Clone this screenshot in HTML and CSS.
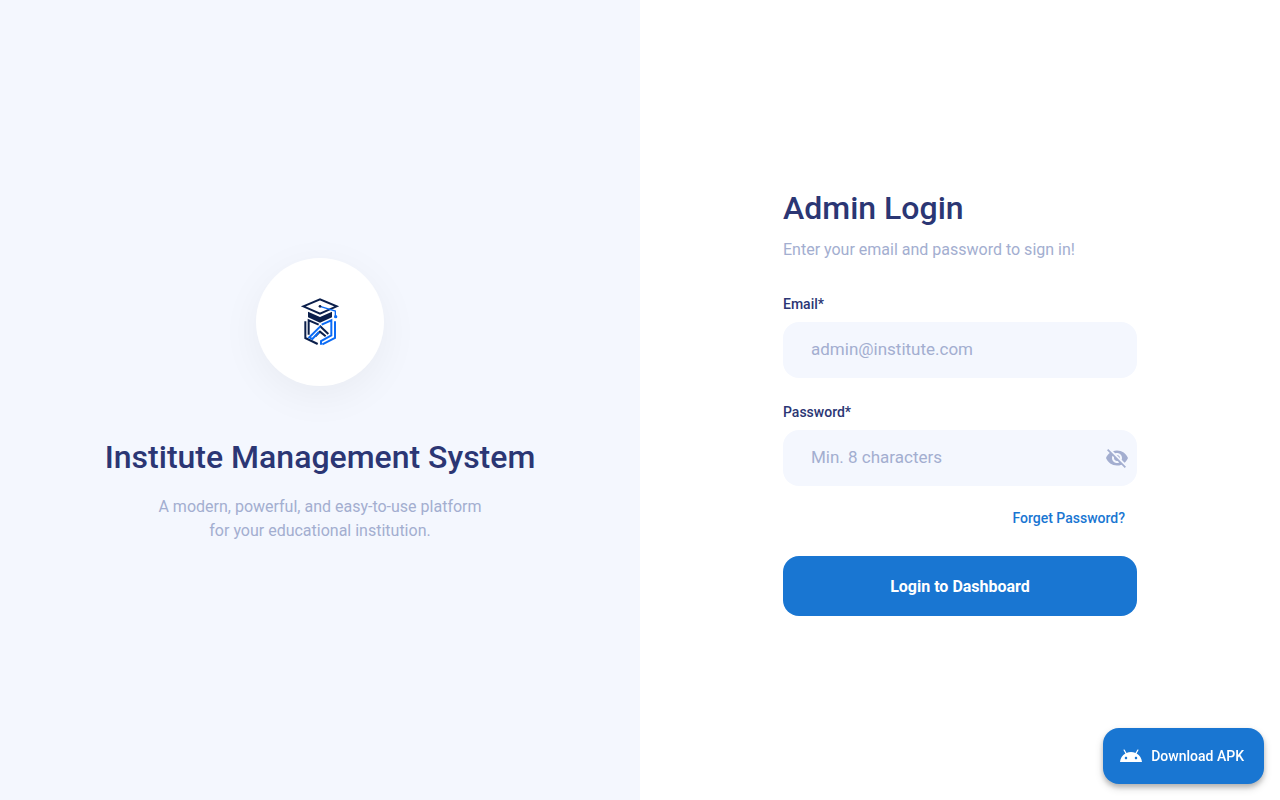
FILE: index.html
```html
<!DOCTYPE html>
<html lang="en">
<head>
    <meta charset="UTF-8">
    <meta name="viewport" content="width=device-width, initial-scale=1.0">
    <title>Institute Management System</title>
    <link rel="stylesheet" href="styles.css">
</head>
<body>
    <div class="page">
        <section class="brand-panel">
            <div class="logo-circle">
                <svg class="logo" viewBox="30 33 120 150" fill="none" stroke-width="6" aria-hidden="true">
                    <!-- Shield and book -->
                    <g stroke="#0b1f4b">
                        <path d="M46 106v50l37 18"/>
                        <path d="M56 146V103l30 13"/>
                        <path d="M89 119l26 25"/>
                        <path d="M76 151l14-14 17 14"/>
                    </g>
                    <g stroke="#0b6bf5">
                        <path d="M135 106v50l-38 19"/>
                        <path d="M95 116l29-13v45l-31 17v11"/>
                        <path d="M91 121l-33 33 9 5 20-21"/>
                    </g>
                    <!-- Cap -->
                    <path d="M54 77l36 16 36-16v17l-36 16-36-16z" fill="#0b1f4b"/>
                    <path d="M40 61l50-21 50 21-50 22z" fill="#fff" stroke="#0b1f4b"/>
                    <path d="M90 61l46 14v18" stroke="#0b6bf5" stroke-width="4"/>
                    <circle cx="90" cy="61" r="4" fill="#0b1f4b"/>
                    <circle cx="137" cy="92" r="5" fill="#0b6bf5"/>
                </svg>
            </div>
            <h1 class="brand-title">Institute Management System</h1>
            <p class="brand-text">A modern, powerful, and easy-to-use platform<br>for your educational institution.</p>
        </section>

        <main class="login-panel">
            <form class="login-form">
                <h2>Admin Login</h2>
                <p class="subtitle">Enter your email and password to sign in!</p>

                <label for="email">Email*</label>
                <div class="field">
                    <input type="email" id="email" placeholder="admin@institute.com">
                </div>

                <label for="password">Password*</label>
                <div class="field">
                    <input type="password" id="password" placeholder="Min. 8 characters">
                    <button type="button" class="toggle-btn" aria-label="Show password">
                        <svg viewBox="0 0 24 24" fill="currentColor"><path d="M12 7c2.76 0 5 2.24 5 5 0 .65-.13 1.26-.36 1.83l2.92 2.92c1.51-1.26 2.7-2.89 3.43-4.75-1.73-4.39-6-7.5-11-7.5-1.4 0-2.74.25-3.98.7l2.16 2.16C10.74 7.13 11.35 7 12 7zM2 4.27l2.28 2.28.46.46C3.08 8.3 1.78 10.02 1 12c1.73 4.39 6 7.5 11 7.5 1.55 0 3.03-.3 4.38-.84l.42.42L19.73 22 21 20.73 3.27 3 2 4.27zM7.53 9.8l1.55 1.55c-.05.21-.08.43-.08.65 0 1.66 1.34 3 3 3 .22 0 .44-.03.65-.08l1.55 1.55c-.67.33-1.41.53-2.2.53-2.76 0-5-2.24-5-5 0-.79.2-1.53.53-2.2zm4.31-.78l3.15 3.15.02-.16c0-1.66-1.34-3-3-3l-.17.01z"/></svg>
                    </button>
                </div>

                <a class="forgot-link" href="#">Forget Password?</a>
                <button type="submit" class="login-btn">Login to Dashboard</button>
            </form>
        </main>
    </div>

    <button type="button" class="download-btn">
        <svg viewBox="0 0 24 24" fill="currentColor" aria-hidden="true"><path d="M17.6 9.48l1.84-3.18c.16-.31.04-.69-.26-.85-.29-.15-.65-.06-.83.22l-1.88 3.24c-2.86-1.21-6.08-1.21-8.94 0L5.65 5.67c-.19-.29-.58-.38-.87-.2-.28.18-.37.54-.22.83L6.4 9.48C3.3 11.25 1.28 14.44 1 18h22c-.28-3.56-2.3-6.75-5.4-8.52zM7 15.25c-.69 0-1.25-.56-1.25-1.25s.56-1.25 1.25-1.25 1.25.56 1.25 1.25-.56 1.25-1.25 1.25zm10 0c-.69 0-1.25-.56-1.25-1.25s.56-1.25 1.25-1.25 1.25.56 1.25 1.25-.56 1.25-1.25 1.25z"/></svg>
        Download APK
    </button>
</body>
</html>
```
FILE: styles.css
```css
:root {
    --primary-color: #1976d2;
    --title-color: #2b3674;
    --muted-color: #a3aed0;
    --panel-color: #f4f7fe;
}

* {
    margin: 0;
    padding: 0;
    box-sizing: border-box;
}

body {
    font-family: Roboto, sans-serif;
    background-color: white;
    color: var(--title-color);
}

button, input {
    font-family: inherit;
    border: none;
}

button {
    cursor: pointer;
}

.page {
    display: grid;
    grid-template-columns: 1fr 1fr;
    min-height: 100vh;
}

.brand-panel {
    display: flex;
    flex-direction: column;
    align-items: center;
    justify-content: center;
    background-color: var(--panel-color);
    text-align: center;
}

.logo-circle {
    display: flex;
    align-items: center;
    justify-content: center;
    width: 128px;
    height: 128px;
    margin-bottom: 47px;
    border-radius: 50%;
    background-color: white;
    box-shadow: 0 10px 40px rgba(0, 0, 0, 0.05);
}

.logo {
    width: 40px;
    height: 50px;
}

h1, h2 {
    font-size: 32px;
    font-weight: 500;
    line-height: 48px;
}

.brand-title {
    margin-bottom: 14px;
}

.brand-text, .subtitle {
    color: var(--muted-color);
    font-size: 16px;
    line-height: 24px;
}

.login-panel {
    display: flex;
    align-items: center;
    justify-content: center;
    padding: 24px;
}

.login-form {
    display: flex;
    flex-direction: column;
    width: 100%;
    max-width: 354px;
}

.subtitle {
    margin: 6px 0 32px;
}

label {
    margin-bottom: 8px;
    font-size: 14px;
    font-weight: 500;
    line-height: 20px;
}

.field {
    display: flex;
    align-items: center;
    margin-bottom: 24px;
    padding-right: 8px;
    border-radius: 16px;
    background-color: var(--panel-color);
}

.field input {
    flex: 1;
    min-width: 0;
    height: 56px;
    padding: 0 0 2px 28px;
    background: transparent;
    color: var(--title-color);
    font-size: 17px;
    outline: none;
}

.field input::placeholder {
    color: var(--muted-color);
}

.toggle-btn {
    display: flex;
    background: transparent;
    color: var(--muted-color);
}

.toggle-btn svg, .download-btn svg {
    width: 24px;
    height: 24px;
}

.forgot-link {
    align-self: flex-end;
    margin: 0 12px 30px 0;
    color: var(--primary-color);
    font-size: 14px;
    font-weight: 500;
    line-height: 16px;
    text-decoration: none;
}

.login-btn {
    height: 60px;
    border-radius: 16px;
    background-color: var(--primary-color);
    color: white;
    font-size: 16px;
    font-weight: 700;
}

.download-btn {
    position: fixed;
    right: 16px;
    bottom: 16px;
    display: flex;
    align-items: center;
    gap: 8px;
    height: 56px;
    padding: 0 20px 0 16px;
    border-radius: 16px;
    background-color: var(--primary-color);
    color: white;
    font-size: 14px;
    font-weight: 500;
    box-shadow: 0 3px 5px rgba(0, 0, 0, 0.2), 0 4px 8px rgba(0, 0, 0, 0.16);
}
```
